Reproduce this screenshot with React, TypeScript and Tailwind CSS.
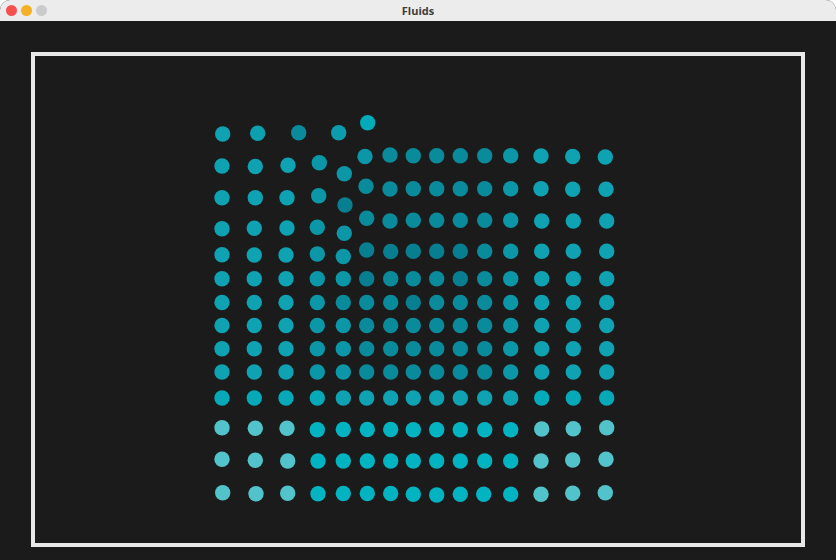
import React from "react";

const PAL: Record<string, string> = {
  A: "#0fa2b2",
  B: "#0c97a8",
  C: "#0a8b9c",
  D: "#087f90",
  E: "#02b3c2",
  F: "#52c3cb",
  G: "#07a9b8",
  H: "#04acbb",
};

const X_STD = [222, 254.3, 286, 317.3, 343.3, 366.7, 390.7, 413.3, 436.7, 460.3, 484.7, 510.7, 541.7, 573.3, 606.7];

type Row = { xs: number[]; ys: number[] | number; cols: string };

const rows: Row[] = [
  {
    xs: [222, 255.3, 288, 319.3, 344.3, 365, 390, 413.3, 436.7, 460.3, 484.7, 510.7, 541, 572.7, 605.3],
    ys: [166, 166.5, 165.3, 162.7, 173.7, 156.5, 155, 155.7, 155.7, 155.7, 155.7, 155.7, 156, 156.5, 157],
    cols: "AAABBBCCCCCBAAA",
  },
  {
    xs: [222, 255.3, 287, 318.7, 345, 366, 390, 413.3, 436.7, 460.3, 484.7, 510.7, 541, 572.7, 606],
    ys: [197.7, 197.7, 197.7, 195.7, 205, 186.3, 189, 188.7, 188.7, 188.7, 188.7, 188.7, 188.7, 189.3, 189.3],
    cols: "AAABDCCCCCCBAAA",
  },
  {
    xs: [222, 254.3, 287, 317.3, 344.3, 366.7, 390, 413.3, 436.7, 460.3, 484.7, 510.7, 541.7, 573.3, 606.7],
    ys: [228.7, 228.3, 228, 227.3, 233.3, 218.3, 221, 220.3, 220.3, 220.3, 220.3, 220.3, 221, 221, 221],
    cols: "AAABBCCCCCCBAAA",
  },
  {
    xs: X_STD,
    ys: [254.7, 255, 255, 254, 256.5, 250, 251.5, 251.3, 251.3, 251.3, 251.3, 251.3, 251.3, 251.3, 251.3],
    cols: "AAABBDDDDDCBAAA",
  },
  { xs: X_STD, ys: 278.7, cols: "AAABBDCCCDCBAAA" },
  { xs: X_STD, ys: 302.5, cols: "AAABCCCDCCCBAAA" },
  { xs: X_STD, ys: 325.5, cols: "AAABBCCCCCCBAAA" },
  { xs: X_STD, ys: 348.7, cols: "AAABBCCCCCCBAAA" },
  { xs: X_STD, ys: 372, cols: "AAABBCCCCCCBAAA" },
  { xs: X_STD, ys: 398, cols: "GGGGAAAAAAAAHGG" },
  {
    xs: [222, 255.3, 287, 317.3, 343.3, 367.3, 390.7, 413.3, 436.7, 460.3, 484.7, 510.7, 541.7, 573.3, 606.7],
    ys: [427.7, 428.3, 428.3, 429.7, 429.5, 429.5, 429.5, 429.7, 429.7, 429.7, 429.7, 429.7, 429, 428.7, 427.7],
    cols: "FFFEEEEEEEEEFFF",
  },
  {
    xs: [222, 255.3, 287.7, 318, 343.3, 367.3, 390.7, 413.3, 436.7, 460.3, 484.7, 510.7, 541, 572.7, 606],
    ys: [459.3, 460.3, 461, 461, 461, 461, 461, 461, 461, 461, 461, 461, 461, 460, 459.3],
    cols: "FFFEEEEEEEEEFFF",
  },
  {
    xs: [222.7, 256, 287.7, 318, 343.3, 367.3, 390.7, 413.3, 436.7, 460.3, 483.7, 510.7, 541, 572.7, 605.3],
    ys: [492.7, 493.7, 493.3, 493.7, 493.5, 493.5, 493.5, 494.3, 495, 494.3, 494.3, 494.3, 494.3, 493.3, 492.7],
    cols: "FFFEEEEEEEEEFFF",
  },
];

const topRow: [number, number, string][] = [
  [222.7, 134, "#10a2b2"],
  [257.7, 133.3, "#0e9fb0"],
  [298.7, 132.7, "#0a8a9a"],
  [338.7, 132.7, "#0d9cad"],
  [367.7, 122.7, "#03abba"],
];

function Particles() {
  const dots: { x: number; y: number; c: string }[] = [];
  topRow.forEach(([x, y, c]) => dots.push({ x, y, c }));
  rows.forEach((r) => {
    r.xs.forEach((x, i) => {
      const y = Array.isArray(r.ys) ? r.ys[i] : r.ys;
      dots.push({ x, y, c: PAL[r.cols[i]] });
    });
  });
  return (
    <svg className="absolute inset-0 w-full h-full" viewBox="35 56 766 487" width={766} height={487}>
      {dots.map((d, i) => (
        <circle key={i} cx={d.x} cy={d.y} r={7.7} fill={d.c} />
      ))}
    </svg>
  );
}

export default function App() {
  return (
    <div className="w-[836px] h-[560px] bg-white overflow-hidden">
      <div className="w-full h-full rounded-t-[10px] overflow-hidden flex flex-col bg-[#1b1b1b]">
        <div className="h-[21px] shrink-0 bg-[#ececec] relative flex items-center justify-center">
          <div className="absolute left-[5.5px] top-[4.5px] flex gap-[4px]">
            <span className="w-[11px] h-[11px] rounded-full bg-[#f5504c]" />
            <span className="w-[11px] h-[11px] rounded-full bg-[#f5b025]" />
            <span className="w-[11px] h-[11px] rounded-full bg-[#cbcbcb]" />
          </div>
          <span
            className="text-[11px] font-bold text-[#3c3c3c] leading-none"
            style={{ fontFamily: "'Open Sans', 'Liberation Sans', sans-serif" }}
          >
            Fluids
          </span>
        </div>
        <div className="flex-1 pl-[31px] pt-[31px]">
          <div className="w-[774px] h-[495px] border-[4px] border-[#e8e8e8] bg-[#1b1b1b] relative">
            <Particles />
          </div>
        </div>
      </div>
    </div>
  );
}
